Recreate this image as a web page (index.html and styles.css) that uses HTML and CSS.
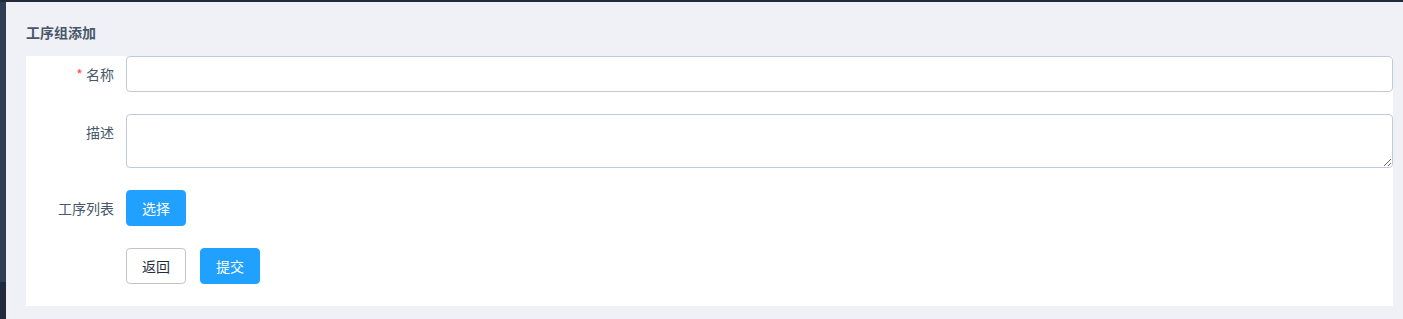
FILE: index.html
```html
<!DOCTYPE html>
<html lang="zh-CN">
<head>
<meta charset="utf-8">
<title>工序组添加</title>
<link rel="stylesheet" href="styles.css">
</head>
<body>
<div class="topbar"></div>
<div class="layout">
  <aside class="sidebar"><div class="sidebar-top"></div><div class="sidebar-bottom"></div></aside>
  <main class="main">
    <h2 class="title">工序组添加</h2>
    <form class="card">
      <div class="row">
        <label class="label"><span class="req">*</span> 名称</label>
        <input class="input" type="text">
      </div>
      <div class="row">
        <label class="label">描述</label>
        <textarea class="textarea"></textarea>
      </div>
      <div class="row">
        <label class="label">工序列表</label>
        <button type="button" class="btn btn-primary">选择</button>
      </div>
      <div class="row">
        <span class="label"></span>
        <div class="actions">
          <button type="button" class="btn btn-default">返回</button>
          <button type="button" class="btn btn-primary">提交</button>
        </div>
      </div>
    </form>
  </main>
</div>
</body>
</html>
```
FILE: styles.css
```css
* { box-sizing: border-box; }
html, body { margin: 0; padding: 0; }
body {
  width: 1403px;
  height: 319px;
  overflow: hidden;
  background: #f0f1f6;
  font-family: "Noto Sans CJK SC", "Noto Sans", sans-serif;
  font-size: 14px;
  color: #48576a;
}
.topbar { height: 2px; background: #1f2a3a; }
.layout { display: flex; height: 317px; }
.sidebar { width: 6px; display: flex; flex-direction: column; }
.sidebar-top { height: 280px; background: #2e3e55; }
.sidebar-bottom { flex: 1; background: #1f2b3c; }
.main { flex: 1; padding: 0 10px 0 20px; }
.title {
  margin: 0;
  height: 54px;
  line-height: 60px;
  font-size: 14px;
  font-weight: bold;
  color: #48576a;
}
.card {
  background: #fff;
  padding-bottom: 22px;
}
.row { display: flex; align-items: flex-start; margin-bottom: 22px; }
.row:last-child { margin-bottom: 0; }
.label {
  width: 100px;
  flex: none;
  padding-right: 12px;
  text-align: right;
  line-height: 36px;
  color: #48576a;
}
.req { color: #ff4949; }
.input, .textarea {
  flex: 1;
  border: 1px solid #bfcbd9;
  border-radius: 4px;
  background: #fff;
  font: inherit;
  outline: none;
}
.input { height: 36px; }
.textarea { height: 54px; resize: vertical; display: block; }
.actions { display: flex; gap: 14px; }
.btn {
  width: 60px;
  height: 36px;
  border-radius: 4px;
  font: inherit;
  font-size: 14px;
  cursor: pointer;
  padding: 0;
}
.btn-primary { background: #20a0ff; border: 1px solid #20a0ff; color: #fff; }
.btn-default { background: #fff; border: 1px solid #c4c4c4; color: #1f2d3d; }
```
